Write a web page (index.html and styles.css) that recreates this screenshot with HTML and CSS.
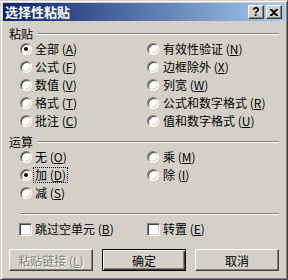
FILE: index.html
```html
<!DOCTYPE html>
<html lang="zh-CN">
<head>
<meta charset="utf-8">
<title>选择性粘贴</title>
<link rel="stylesheet" href="styles.css">
</head>
<body>
<div class="window">
  <div class="caption">
    <span class="caption-title">选择性粘贴</span>
    <span class="cap-btn help">?</span>
    <span class="cap-btn close"><svg width="8" height="7" viewBox="0 0 8 7"><path d="M0 0h2l2 2 2-2h2v1L5 3.5 8 6v1H6L4 5 2 7H0V6l3-2.5L0 1z" fill="#000"/></svg></span>
  </div>
  <div class="client">
    <div class="group-head"><span class="group-label">粘贴</span><span class="etch"></span></div>
    <div class="opts">
      <label class="opt"><span class="radio checked"></span>全部 (<u>A</u>)</label>
      <label class="opt r"><span class="radio"></span>有效性验证 (<u>N</u>)</label>
      <label class="opt"><span class="radio"></span>公式 (<u>F</u>)</label>
      <label class="opt r"><span class="radio"></span>边框除外 (<u>X</u>)</label>
      <label class="opt"><span class="radio"></span>数值 (<u>V</u>)</label>
      <label class="opt r"><span class="radio"></span>列宽 (<u>W</u>)</label>
      <label class="opt"><span class="radio"></span>格式 (<u>T</u>)</label>
      <label class="opt r"><span class="radio"></span>公式和数字格式 (<u>R</u>)</label>
      <label class="opt"><span class="radio"></span>批注 (<u>C</u>)</label>
      <label class="opt r"><span class="radio"></span>值和数字格式 (<u>U</u>)</label>
    </div>
    <div class="group-head second"><span class="group-label">运算</span><span class="etch"></span></div>
    <div class="opts">
      <label class="opt"><span class="radio"></span>无 (<u>O</u>)</label>
      <label class="opt r"><span class="radio"></span>乘 (<u>M</u>)</label>
      <label class="opt"><span class="radio checked"></span><span class="focus">加 (<u>D</u>)</span></label>
      <label class="opt r"><span class="radio"></span>除 (<u>I</u>)</label>
      <label class="opt"><span class="radio"></span>减 (<u>S</u>)</label>
    </div>
    <div class="etch sep"></div>
    <div class="checks">
      <label class="opt"><span class="check"></span>跳过空单元 (<u>B</u>)</label>
      <label class="opt r"><span class="check"></span>转置 (<u>E</u>)</label>
    </div>
    <div class="buttons">
      <span class="btn disabled">粘贴链接 (<u>L</u>)</span>
      <span class="btn default">确定</span>
      <span class="btn">取消</span>
    </div>
  </div>
</div>
</body>
</html>
```
FILE: styles.css
```css
* { box-sizing: border-box; }
html, body { margin: 0; padding: 0; }
body {
  font-family: "Noto Sans CJK SC", "Liberation Sans", sans-serif;
  font-size: 12px;
  color: #000;
  background: #d4d0c8;
}
.window {
  width: 288px;
  height: 280px;
  background: #d4d0c8;
  border: 1px solid;
  border-color: #d4d0c8 #404040 #404040 #d4d0c8;
  box-shadow: inset 1px 1px #fff, inset -1px -1px #808080;
  padding: 2px;
  display: flex;
  flex-direction: column;
}
.caption {
  height: 18px;
  flex: none;
  background: linear-gradient(to right, #0a246a, #a6caf0);
  display: flex;
  align-items: center;
  padding: 0 3px 0 2px;
  color: #fff;
}
.caption-title {
  font-weight: bold;
  font-size: 13px;
  line-height: 18px;
  flex: 1;
}
.cap-btn {
  width: 16px;
  height: 14px;
  background: #d4d0c8;
  border: 1px solid;
  border-color: #fff #404040 #404040 #fff;
  box-shadow: inset -1px -1px #808080;
  display: flex;
  align-items: center;
  justify-content: center;
  color: #000;
}
.help {
  font-family: "Liberation Sans", sans-serif;
  font-weight: bold;
  font-size: 12px;
  line-height: 12px;
  margin-right: 2px;
}
.close svg { display: block; }
.client {
  flex: 1;
  padding: 0 6px;
  display: flex;
  flex-direction: column;
}
.group-head {
  margin-top: 7px;
  height: 12px;
  display: flex;
  align-items: center;
}
.group-head.second { margin-top: 6px; }
.group-label {
  line-height: 12px;
  margin-right: 5px;
}
.etch {
  flex: 1;
  height: 2px;
  border-top: 1px solid #808080;
  border-bottom: 1px solid #fff;
}
.opts, .checks {
  display: grid;
  grid-template-columns: 127px 1fr;
  grid-auto-rows: 18px;
  padding-left: 11px;
}
.opt {
  display: flex;
  align-items: center;
  white-space: nowrap;
  line-height: 14px;
}
.radio {
  width: 12px;
  height: 12px;
  flex: none;
  border-radius: 50%;
  background: #fff;
  border: 1px solid;
  border-color: #808080 #fff #fff #808080;
  box-shadow: inset 1px 1px #404040, inset -1px -1px #d4d0c8;
  margin-right: 3px;
  position: relative;
}
.opt.r .radio { margin-right: 4px; }
.radio.checked::after {
  content: "";
  position: absolute;
  left: 3px;
  top: 3px;
  width: 4px;
  height: 4px;
  border-radius: 50%;
  background: #000;
}
.focus {
  outline: 1px dotted #000;
  outline-offset: 0;
  padding: 0 1px;
  margin-left: -1px;
}
.sep {
  flex: none;
  margin: 11px 0 0 11px;
}
.checks {
  margin-top: 5px;
  padding-left: 10px;
  grid-template-columns: 128px 1fr;
}
.check {
  width: 13px;
  height: 13px;
  flex: none;
  background: #fff;
  border: 1px solid;
  border-color: #808080 #fff #fff #808080;
  box-shadow: inset 1px 1px #404040, inset -1px -1px #d4d0c8;
  margin-right: 3px;
}
.buttons {
  margin-top: 11px;
  display: flex;
  justify-content: flex-end;
  gap: 9px;
}
.btn {
  width: 84px;
  height: 22px;
  display: flex;
  align-items: center;
  justify-content: center;
  background: #d4d0c8;
  border: 1px solid;
  border-color: #fff #404040 #404040 #fff;
  box-shadow: inset -1px -1px #808080;
  white-space: nowrap;
}
.btn.default {
  border-color: #000;
  box-shadow: inset 1px 1px #fff, inset -1px -1px #404040, inset -2px -2px #808080;
}
.btn.disabled {
  color: #808080;
  text-shadow: 1px 1px #fff;
}
```
